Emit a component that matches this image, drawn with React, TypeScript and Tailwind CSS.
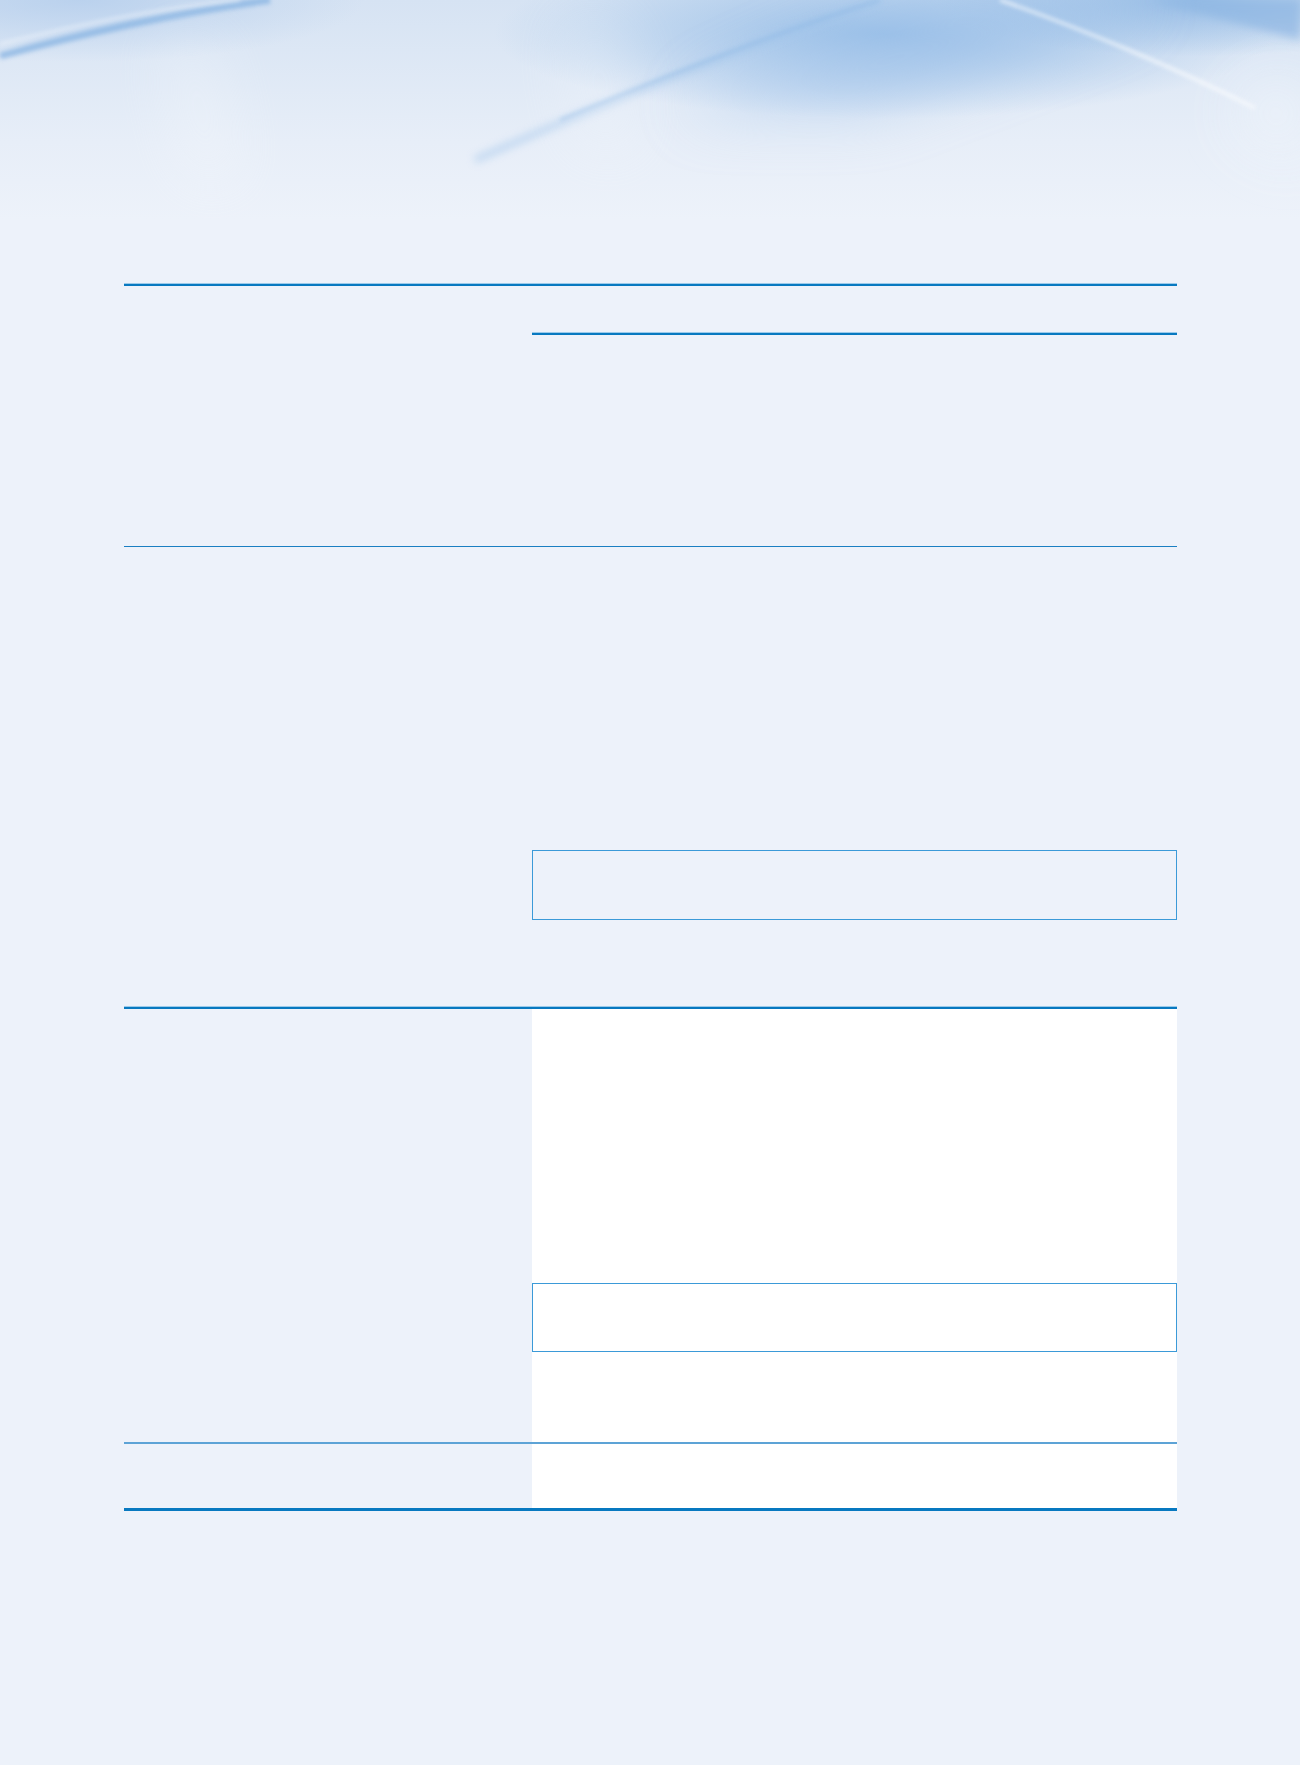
import React from 'react';

// Фоновая "волна" в шапке страницы
function HeaderWave() {
  return (
    <svg viewBox="0 0 1300 283" preserveAspectRatio="none" className="block w-full h-[283px]">
      <defs>
        <linearGradient id="fade" x1="0" y1="0" x2="0" y2="1">
          <stop offset="0" stopColor="#d6e3f3" />
          <stop offset="0.5" stopColor="#e7eef8" />
          <stop offset="0.78" stopColor="#edf2fa" />
          <stop offset="1" stopColor="#edf2fa" />
        </linearGradient>
        <radialGradient id="glowC" cx="0.68" cy="0.12" r="0.3">
          <stop offset="0" stopColor="#92bbe6" stopOpacity="0.9" />
          <stop offset="1" stopColor="#92bbe6" stopOpacity="0" />
        </radialGradient>
        <radialGradient id="glowTR" cx="0.92" cy="0" r="0.2">
          <stop offset="0" stopColor="#8fb8e4" stopOpacity="0.9" />
          <stop offset="1" stopColor="#8fb8e4" stopOpacity="0" />
        </radialGradient>
        <radialGradient id="glowL" cx="0.06" cy="0" r="0.22">
          <stop offset="0" stopColor="#b3cdec" stopOpacity="0.8" />
          <stop offset="1" stopColor="#b3cdec" stopOpacity="0" />
        </radialGradient>
        <filter id="blur2" x="-20%" y="-50%" width="140%" height="200%"><feGaussianBlur stdDeviation="2" /></filter>
        <filter id="blur4" x="-20%" y="-50%" width="140%" height="200%"><feGaussianBlur stdDeviation="4" /></filter>
        <filter id="blur30" x="-60%" y="-80%" width="220%" height="260%"><feGaussianBlur stdDeviation="30" /></filter>
      </defs>
      <rect width="1300" height="283" fill="url(#fade)" />
      <rect width="1300" height="283" fill="url(#glowC)" />
      <rect width="1300" height="283" fill="url(#glowTR)" />
      <rect width="1300" height="283" fill="url(#glowL)" />
      {/* широкие размытые полосы */}
      <path d="M680 110 C770 60 870 20 960 0 L1160 0 C1070 35 960 75 870 110 Z" fill="#a0c3ea" opacity="0.5" filter="url(#blur30)" />
      <path d="M1150 0 L1300 0 L1300 40 Z" fill="#8fb7e3" opacity="0.7" filter="url(#blur4)" />
      <path d="M1230 110 L1300 70 L1300 160 Z" fill="#f3f7fc" opacity="0.8" filter="url(#blur30)" />
      {/* левый изгиб */}
      <path d="M0 56 C80 34 170 14 270 0" stroke="#86b3e2" strokeWidth="7" fill="none" opacity="0.75" filter="url(#blur2)" />
      <path d="M0 44 C80 24 160 8 240 0" stroke="#ffffff" strokeWidth="2" fill="none" opacity="0.6" filter="url(#blur2)" />
      {/* центральная диагональ */}
      <path d="M475 160 C610 100 760 40 880 0" stroke="#9ec3ea" strokeWidth="6" fill="none" opacity="0.6" filter="url(#blur4)" />
      <path d="M560 120 C680 70 790 28 880 0" stroke="#86b4e3" strokeWidth="2" fill="none" opacity="0.6" filter="url(#blur2)" />
      {/* правая светлая диагональ */}
      <path d="M1000 0 C1080 28 1180 70 1255 108" stroke="#ffffff" strokeWidth="2.5" fill="none" opacity="0.85" filter="url(#blur2)" />
      {/* светлые вертикальные отблески */}
      <path d="M160 40 L210 40 L240 180 L190 180 Z" fill="#ffffff" opacity="0.25" filter="url(#blur30)" />
      <path d="M560 20 L620 20 L640 150 L580 150 Z" fill="#ffffff" opacity="0.2" filter="url(#blur30)" />
    </svg>
  );
}

function ThickRule() {
  return (
    <div>
      <div className="h-px bg-[#9ccbea]" />
      <div className="h-[2px] bg-[#0879c0]" />
    </div>
  );
}

export default function App() {
  return (
    <div className="min-h-[1765px] w-[1300px] bg-[#edf2fa] font-['Liberation_Sans',sans-serif]">
      <HeaderWave />

      <div className="mx-[124px] w-[1053px]">
        {/* Блок 1 */}
        <ThickRule />
        <div className="grid grid-cols-[408px_645px] h-[261px] border-b border-[#1a7fc2]">
          <div />
          <div className="pt-[46px]">
            <ThickRule />
          </div>
        </div>

        {/* Блок 2 */}
        <div className="grid grid-cols-[408px_645px] h-[459px]">
          <div />
          <div className="pt-[303px]">
            <div className="h-[70px] border-[1.5px] border-[#3b9ad8]" />
          </div>
        </div>

        {/* Блок 3 */}
        <ThickRule />
        <div className="grid grid-cols-[408px_645px] h-[433px]">
          <div />
          <div className="bg-white pt-[274px]">
            <div className="h-[69px] border-[1.5px] border-[#3b9ad8]" />
          </div>
        </div>
        <div className="h-[2px] bg-[#5da3d6]" />
        <div className="grid grid-cols-[408px_645px] h-[64px]">
          <div />
          <div className="bg-white" />
        </div>
        <div className="h-[3px] bg-[#0879c0]" />
      </div>
    </div>
  );
}
